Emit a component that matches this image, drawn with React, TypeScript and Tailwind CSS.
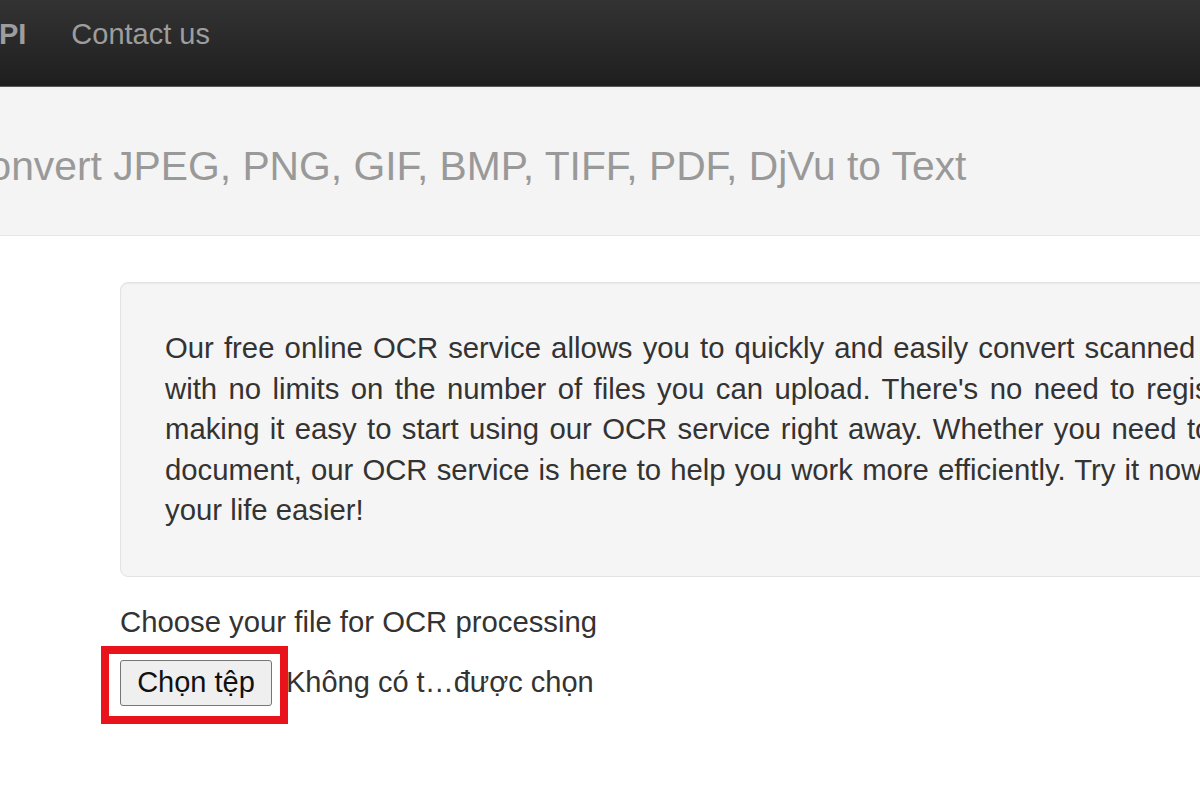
const lines = [
  {
    text: "Our free online OCR service allows you to quickly and easily convert scanned images",
    spacing: "[word-spacing:2px]",
  },
  {
    text: "with no limits on the number of files you can upload. There's no need to register",
    spacing: "[word-spacing:3.3px]",
  },
  {
    text: "making it easy to start using our OCR service right away. Whether you need to extract",
    spacing: "[word-spacing:2.2px]",
  },
  {
    text: "document, our OCR service is here to help you work more efficiently. Try it now and",
    spacing: "[word-spacing:1px]",
  },
];

function Navbar() {
  return (
    <div className="h-[87px] border-b border-[#5a5a5a] bg-gradient-to-b from-[#333333] to-[#1f1f1f] shadow-[0_2px_6px_rgba(0,0,0,0.25)]">
      <div className="ml-[-22px] flex h-[70px] items-center gap-[45px] text-[29px] text-[#9d9d9d]">
        <span className="font-bold">API</span>
        <span>Contact us</span>
      </div>
    </div>
  );
}

function Header() {
  return (
    <div className="flex h-[149px] items-center border-b border-[#e6e6e6] bg-[#f4f4f4] pt-[12px]">
      <h1 className="ml-[-41px] whitespace-nowrap text-[40.8px] text-[#999999]">
        Convert JPEG, PNG, GIF, BMP, TIFF, PDF, DjVu to Text
      </h1>
    </div>
  );
}

function Intro() {
  return (
    <div className="w-[1200px] rounded-lg border border-[#e3e3e3] bg-[#f5f5f5] px-[44px] py-[45px] text-[29.3px] shadow-[inset_0_1px_1px_rgba(0,0,0,0.05)]">
      {lines.map((line) => (
        <div key={line.text} className={`whitespace-nowrap leading-[40.5px] ${line.spacing}`}>
          {line.text}
        </div>
      ))}
      <div className="leading-[40.5px]">your life easier!</div>
    </div>
  );
}

function FilePicker() {
  return (
    <div className="relative mt-[18px] flex items-center">
      <div className="absolute left-[-19px] top-[-14px] h-[78px] w-[187px] border-[8px] border-[#e8131b]" />
      <button className="h-[46px] w-[152px] rounded-[3px] border border-[#767676] bg-[#efefef] text-[29px] text-[#111111]">
        Chọn tệp
      </button>
      <span className="ml-[14px] text-[29px] text-[#333333]">Không có t…được chọn</span>
    </div>
  );
}

export default function App() {
  return (
    <div className="h-[800px] w-[1200px] overflow-hidden bg-white font-['Liberation_Sans',Arial,sans-serif] text-[29px] text-[#333333]">
      <Navbar />
      <Header />
      <div className="pl-[120px] pt-[46px]">
        <Intro />
        <div className="mt-[24px] text-[29.3px] leading-[41px]">Choose your file for OCR processing</div>
        <FilePicker />
      </div>
    </div>
  );
}
